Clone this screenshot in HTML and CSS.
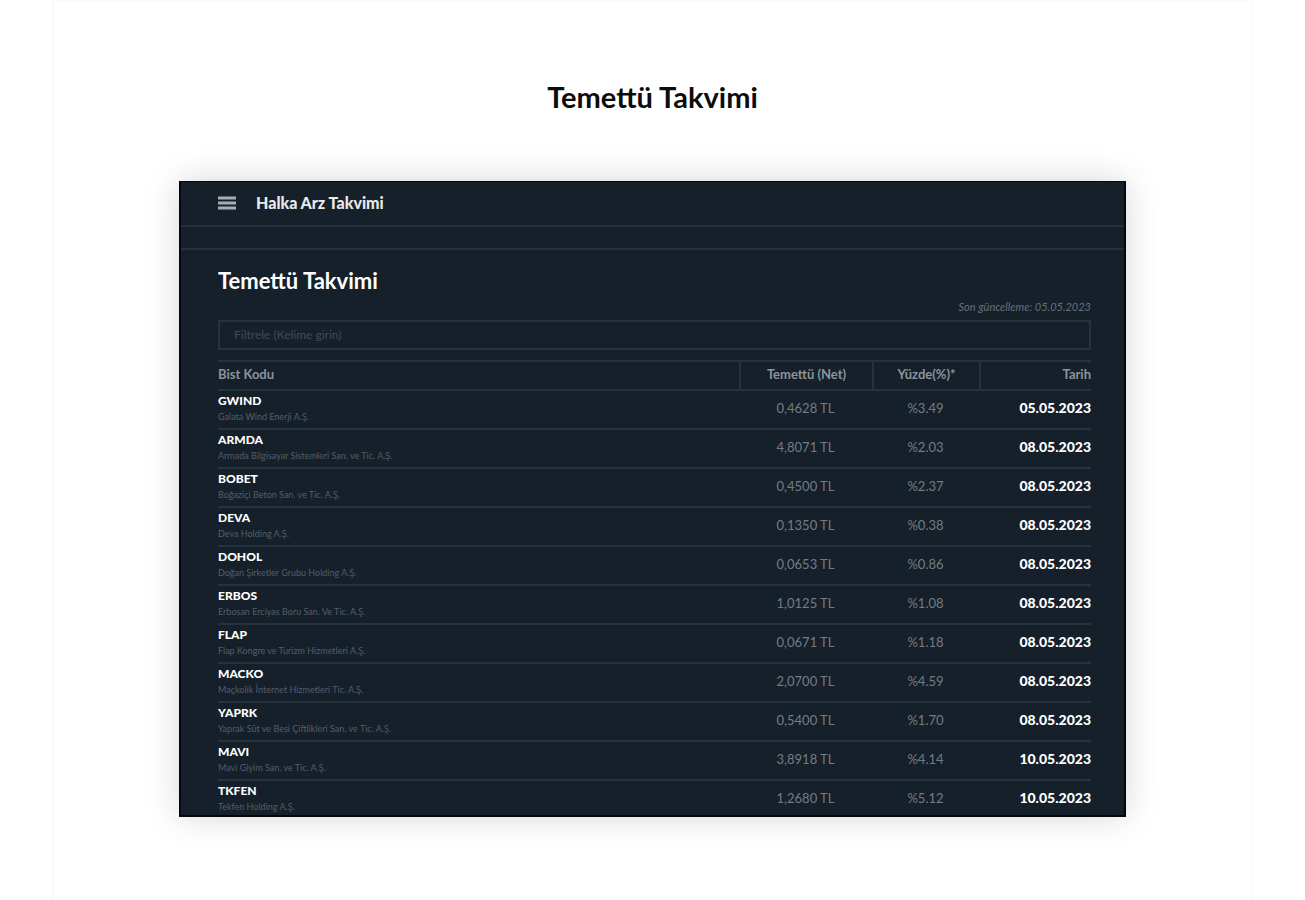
FILE: index.html
```html
<!DOCTYPE html>
<html lang="tr">
<head>
    <meta charset="UTF-8">
    <meta name="viewport" content="width=device-width, initial-scale=1.0">
    <title>Temettü Takvimi</title>
    <link rel="stylesheet" href="styles.css">
</head>
<body>
    <main class="page">
        <h1>Temettü Takvimi</h1>

        <section class="panel">
            <header class="topbar">
                <button class="menu-btn" type="button" aria-label="Menü">
                    <svg width="18" height="14" viewBox="0 0 18 14">
                        <path d="M0 2h18M0 7h18M0 12h18" stroke="currentColor" stroke-width="3"/>
                    </svg>
                </button>
                <a class="brand" href="#">Halka Arz Takvimi</a>
            </header>
            <div class="strip"></div>

            <div class="content">
                <h2>Temettü Takvimi</h2>
                <p class="updated">Son güncelleme: 05.05.2023</p>
                <input class="filter" type="text" placeholder="Filtrele (Kelime girin)" aria-label="Filtrele">

                <table>
                    <thead>
                        <tr>
                            <th class="col-code">Bist Kodu</th>
                            <th class="col-net">Temettü (Net)</th>
                            <th class="col-rate">Yüzde(%)*</th>
                            <th class="col-date">Tarih</th>
                        </tr>
                    </thead>
                    <tbody>
                        <tr>
                            <td><strong>GWIND</strong><small>Galata Wind Enerji A.Ş.</small></td>
                            <td>0,4628 TL</td>
                            <td>%3.49</td>
                            <td>05.05.2023</td>
                        </tr>
                        <tr>
                            <td><strong>ARMDA</strong><small>Armada Bilgisayar Sistemleri San. ve Tic. A.Ş.</small></td>
                            <td>4,8071 TL</td>
                            <td>%2.03</td>
                            <td>08.05.2023</td>
                        </tr>
                        <tr>
                            <td><strong>BOBET</strong><small>Boğaziçi Beton San. ve Tic. A.Ş.</small></td>
                            <td>0,4500 TL</td>
                            <td>%2.37</td>
                            <td>08.05.2023</td>
                        </tr>
                        <tr>
                            <td><strong>DEVA</strong><small>Deva Holding A.Ş.</small></td>
                            <td>0,1350 TL</td>
                            <td>%0.38</td>
                            <td>08.05.2023</td>
                        </tr>
                        <tr>
                            <td><strong>DOHOL</strong><small>Doğan Şirketler Grubu Holding A.Ş.</small></td>
                            <td>0,0653 TL</td>
                            <td>%0.86</td>
                            <td>08.05.2023</td>
                        </tr>
                        <tr>
                            <td><strong>ERBOS</strong><small>Erbosan Erciyas Boru San. Ve Tic. A.Ş.</small></td>
                            <td>1,0125 TL</td>
                            <td>%1.08</td>
                            <td>08.05.2023</td>
                        </tr>
                        <tr>
                            <td><strong>FLAP</strong><small>Flap Kongre ve Turizm Hizmetleri A.Ş.</small></td>
                            <td>0,0671 TL</td>
                            <td>%1.18</td>
                            <td>08.05.2023</td>
                        </tr>
                        <tr>
                            <td><strong>MACKO</strong><small>Maçkolik İnternet Hizmetleri Tic. A.Ş.</small></td>
                            <td>2,0700 TL</td>
                            <td>%4.59</td>
                            <td>08.05.2023</td>
                        </tr>
                        <tr>
                            <td><strong>YAPRK</strong><small>Yaprak Süt ve Besi Çiftlikleri San. ve Tic. A.Ş.</small></td>
                            <td>0,5400 TL</td>
                            <td>%1.70</td>
                            <td>08.05.2023</td>
                        </tr>
                        <tr>
                            <td><strong>MAVI</strong><small>Mavi Giyim San. ve Tic. A.Ş.</small></td>
                            <td>3,8918 TL</td>
                            <td>%4.14</td>
                            <td>10.05.2023</td>
                        </tr>
                        <tr>
                            <td><strong>TKFEN</strong><small>Tekfen Holding A.Ş.</small></td>
                            <td>1,2680 TL</td>
                            <td>%5.12</td>
                            <td>10.05.2023</td>
                        </tr>
                    </tbody>
                </table>
            </div>
        </section>
    </main>
</body>
</html>
```
FILE: styles.css
```css
* {
    box-sizing: border-box;
}
body {
    margin: 0;
    padding: 0 52px;
    background-color: #fff;
    font-family: Lato, "Open Sans", sans-serif;
}
.page {
    min-height: 100vh;
    padding: 80px 125px 82px;
    border: 2px solid #fafafa;
    border-width: 1px 2px 0;
}
h1 {
    margin: 0 0 68px;
    font-size: 29px;
    line-height: 32px;
    text-align: center;
    color: #0c0c0c;
}
.panel {
    background-color: #16202a;
    border: 2px solid #03070f;
    border-top-width: 1px;
    box-shadow: 0 0 32px rgba(0, 0, 0, 0.16);
    color: #fff;
}
.topbar {
    display: flex;
    align-items: center;
    gap: 20px;
    height: 45px;
    padding: 0 37px 2px;
    border-bottom: 2px solid #27323c;
}
.menu-btn {
    display: flex;
    padding: 0;
    border: none;
    background: none;
    color: #a9adb3;
    cursor: pointer;
}
.brand {
    font-size: 16px;
    font-weight: 900;
    color: #e8eaec;
    text-decoration: none;
}
.strip {
    height: 23px;
    border-bottom: 2px solid #27323c;
}
.content {
    padding: 18px 33px 0 37px;
}
h2 {
    margin: 0;
    font-size: 22px;
    line-height: 26px;
}
.updated {
    margin: 4px 0;
    font-size: 11px;
    line-height: 18px;
    font-style: italic;
    text-align: right;
    color: #66707a;
}
.filter {
    display: block;
    width: 100%;
    height: 30px;
    padding: 0 14px 2px;
    border: 2px solid #27323c;
    background: none;
    font-family: inherit;
    font-size: 12px;
    color: #fff;
}
.filter::placeholder {
    color: #414b55;
}
table {
    width: 100%;
    margin-top: 10px;
    table-layout: fixed;
    border-collapse: separate;
    border-spacing: 0;
    border-top: 2px solid #27323c;
}
th {
    height: 29px;
    padding: 0 0 4px;
    border-bottom: 2px solid #27323c;
    font-size: 13px;
    color: #8b949c;
}
th + th {
    border-left: 2px solid #27323c;
}
.col-code {
    text-align: left;
}
.col-net {
    width: 133px;
}
.col-rate {
    width: 107px;
}
.col-date {
    width: 112px;
    text-align: right;
}
td {
    height: 39px;
    padding: 0 0 4px;
    border-bottom: 2px solid #27323c;
    font-size: 13px;
    text-align: center;
    color: #737c85;
}
td:first-child {
    text-align: left;
}
td:last-child {
    font-size: 14px;
    font-weight: 900;
    text-align: right;
    color: #fff;
}
tbody tr:last-child td {
    height: 34px;
    padding-bottom: 1px;
    border-bottom: none;
}
td strong {
    display: block;
    font-size: 12px;
    line-height: 18px;
    font-weight: 900;
    color: #fff;
}
td small {
    display: block;
    font-size: 9px;
    line-height: 14px;
    color: #535e68;
}
```
